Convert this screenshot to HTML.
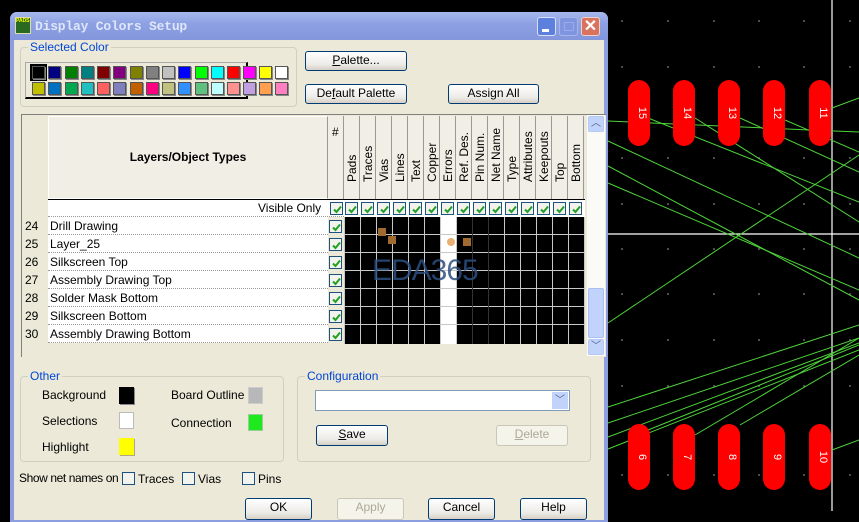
<!DOCTYPE html>
<html><head><meta charset="utf-8">
<style>
*{margin:0;padding:0;box-sizing:border-box}
body{width:859px;height:511px;overflow:hidden;background:#000;position:relative;font-family:"Liberation Sans",Arial,sans-serif;font-size:12px;color:#000}
.a{position:absolute}
.btn{position:absolute;background:linear-gradient(#fff,#ecebe6 70%,#d6d0c5);border:1px solid #003c74;border-radius:3px;text-align:center;font-size:12px;line-height:17px}
.btn.dis{border-color:#c9c7ba;color:#aca899;background:#f5f4ea}
.grp{position:absolute;border:1px solid #d0d0bf;border-radius:4px}
.lg{position:absolute;background:#ece9d8;color:#0046d5;padding:0 2px;font-size:12px}
.sw{position:absolute;width:13px;height:13px;border:1px solid #555;box-shadow:1px 1px 0 #888}
.cb{position:absolute;width:13px;height:13px;border:1px solid #1c5180;background:#f3f3ee}
.cb svg{position:absolute;left:1px;top:1px}
.hdr{position:absolute;top:116px;width:16px;height:83px;border-right:1px solid #999;background:#f1efe5}
.hdr span{position:absolute;left:1px;bottom:3px;transform-origin:0 0;transform:rotate(-90deg) translate(0,0);white-space:nowrap;font-size:12px;line-height:14px;}
.row{position:absolute;left:22px;width:322px;height:18px}
.num{position:absolute;left:3px;top:2px;font-size:12px}
.nm{position:absolute;left:26px;top:0;width:280px;height:18px;background:#fff;border-bottom:1px dotted #999;padding:2px 0 0 2px;font-size:12px}
</style></head><body>

<!-- PCB area -->
<svg class="a" style="left:600px;top:0" width="259" height="511">
<g fill="#666">
<circle cx="22" cy="21" r="1"/><circle cx="68" cy="21" r="1"/><circle cx="114" cy="21" r="1"/><circle cx="159" cy="21" r="1"/><circle cx="204" cy="21" r="1"/><circle cx="250" cy="21" r="1"/>
<circle cx="22" cy="67" r="1"/><circle cx="68" cy="67" r="1"/><circle cx="114" cy="67" r="1"/><circle cx="159" cy="67" r="1"/><circle cx="204" cy="67" r="1"/><circle cx="250" cy="67" r="1"/>
<circle cx="22" cy="158" r="1"/><circle cx="68" cy="158" r="1"/><circle cx="114" cy="158" r="1"/><circle cx="159" cy="158" r="1"/><circle cx="204" cy="158" r="1"/><circle cx="250" cy="158" r="1"/>
<circle cx="22" cy="204" r="1"/><circle cx="68" cy="204" r="1"/><circle cx="114" cy="204" r="1"/><circle cx="159" cy="204" r="1"/><circle cx="204" cy="204" r="1"/><circle cx="250" cy="204" r="1"/>
<circle cx="22" cy="249" r="1"/><circle cx="68" cy="249" r="1"/><circle cx="114" cy="249" r="1"/><circle cx="159" cy="249" r="1"/><circle cx="204" cy="249" r="1"/><circle cx="250" cy="249" r="1"/>
<circle cx="22" cy="294" r="1"/><circle cx="68" cy="294" r="1"/><circle cx="114" cy="294" r="1"/><circle cx="159" cy="294" r="1"/><circle cx="204" cy="294" r="1"/><circle cx="250" cy="294" r="1"/>
<circle cx="22" cy="340" r="1"/><circle cx="68" cy="340" r="1"/><circle cx="114" cy="340" r="1"/><circle cx="159" cy="340" r="1"/><circle cx="204" cy="340" r="1"/><circle cx="250" cy="340" r="1"/>
<circle cx="22" cy="386" r="1"/><circle cx="68" cy="386" r="1"/><circle cx="114" cy="386" r="1"/><circle cx="159" cy="386" r="1"/><circle cx="204" cy="386" r="1"/><circle cx="250" cy="386" r="1"/>
<circle cx="22" cy="475" r="1"/><circle cx="68" cy="475" r="1"/><circle cx="114" cy="475" r="1"/><circle cx="159" cy="475" r="1"/><circle cx="204" cy="475" r="1"/><circle cx="250" cy="475" r="1"/>
</g>
<line x1="232" y1="0" x2="232" y2="511" stroke="#fff" stroke-width="1.2"/>
<line x1="8" y1="234" x2="259" y2="234" stroke="#fff" stroke-width="1.2"/>
<g stroke="#4ed33a" stroke-width="1" fill="none">
<line x1="8" y1="121" x2="210" y2="130"/>
<line x1="210" y1="130" x2="259" y2="132"/>
<line x1="232" y1="108" x2="259" y2="98"/>
<line x1="48" y1="118" x2="259" y2="202"/>
<line x1="95" y1="118" x2="259" y2="222"/>
<line x1="140" y1="118" x2="259" y2="172"/>
<line x1="185" y1="120" x2="259" y2="152"/>
<line x1="8" y1="141" x2="259" y2="258"/>
<line x1="8" y1="166" x2="259" y2="300"/>
<line x1="8" y1="183" x2="259" y2="290"/>
<line x1="8" y1="323" x2="259" y2="155"/>
<line x1="8" y1="407" x2="259" y2="325"/>
<line x1="8" y1="423" x2="259" y2="338"/>
<line x1="8" y1="437" x2="259" y2="343"/>
<line x1="8" y1="449" x2="259" y2="350"/>
<line x1="48" y1="430" x2="259" y2="345"/>
<line x1="95" y1="435" x2="259" y2="338"/>
<line x1="140" y1="425" x2="259" y2="355"/>
<line x1="232" y1="450" x2="259" y2="440"/>
</g>
<g fill="#f00">
<rect x="28" y="80" width="22" height="66" rx="11"/><rect x="73" y="80" width="22" height="66" rx="11"/><rect x="118" y="80" width="22" height="66" rx="11"/><rect x="163" y="80" width="22" height="66" rx="11"/><rect x="209" y="80" width="22" height="66" rx="11"/>
<rect x="28" y="424" width="22" height="66" rx="11"/><rect x="73" y="424" width="22" height="66" rx="11"/><rect x="118" y="424" width="22" height="66" rx="11"/><rect x="163" y="424" width="22" height="66" rx="11"/><rect x="209" y="424" width="22" height="66" rx="11"/>
</g>
<g fill="#fff" font-family="Liberation Sans" font-size="11" text-anchor="middle">
<text transform="translate(39,113) rotate(90)">15</text><text transform="translate(84,113) rotate(90)">14</text><text transform="translate(129,113) rotate(90)">13</text><text transform="translate(174,113) rotate(90)">12</text><text transform="translate(220,113) rotate(90)">11</text>
<text transform="translate(39,457) rotate(90)">6</text><text transform="translate(84,457) rotate(90)">7</text><text transform="translate(129,457) rotate(90)">8</text><text transform="translate(174,457) rotate(90)">9</text><text transform="translate(220,457) rotate(90)">10</text>
</g>
</svg>

<!-- dialog frame -->
<div class="a" style="left:10px;top:12px;width:598px;height:510px;background:#8d9ee0;border-radius:7px 7px 0 0"></div>
<div class="a" style="left:10px;top:12px;width:598px;height:28px;background:linear-gradient(#a8b8ee,#8da1e3 40%,#8396dc);border-radius:7px 7px 0 0"></div>
<div class="a" style="left:15px;top:17px;width:16px;height:17px;background:#2a6a20;border:1px solid #dda"><div style="font-size:5px;color:#ff0;font-weight:bold;line-height:6px">PADS</div></div>
<div class="a" style="left:35px;top:19px;color:#dfe6fa;font-family:'Liberation Mono',monospace;font-weight:bold;font-size:13px;letter-spacing:-0.2px">Display Colors Setup</div>
<div class="a" style="left:537px;top:17px;width:19px;height:19px;background:#5d7fdd;border:1px solid #d8e0f8;border-radius:3px"><div class="a" style="left:4px;top:11px;width:7px;height:3px;background:#fff"></div></div>
<div class="a" style="left:559px;top:17px;width:19px;height:19px;background:#7f95df;border:1px solid #a6b6ec;border-radius:3px"><div class="a" style="left:4px;top:4px;width:10px;height:9px;border:1px solid #9aace8"></div></div>
<div class="a" style="left:581px;top:17px;width:19px;height:19px;background:#d9735e;border:1px solid #f0d0c8;border-radius:3px;color:#fff;font-weight:bold;font-size:16px;line-height:17px;text-align:center">✕</div>
<div class="a" style="left:14px;top:40px;width:590px;height:480px;background:#ece9d8"></div>

<!-- Selected color -->
<div class="grp" style="left:20px;top:47px;width:277px;height:60px"></div>
<div class="lg" style="left:28px;top:40px">Selected Color</div>
<div class="a" style="left:25px;top:62px;width:223px;height:37px;border-top:1px solid #aaa;border-left:1px solid #aaa;border-right:2px solid #000;border-bottom:2px solid #000;background:#ece9d8"></div>
<div class="a" style="left:30px;top:64px;width:17px;height:17px;border:2px solid #000;background:#fff"></div>
<div class="sw" style="left:32px;top:66px;background:#000"></div>
<div class="sw" style="left:48px;top:66px;background:#000080"></div>
<div class="sw" style="left:65px;top:66px;background:#008000"></div>
<div class="sw" style="left:81px;top:66px;background:#008080"></div>
<div class="sw" style="left:97px;top:66px;background:#800000"></div>
<div class="sw" style="left:113px;top:66px;background:#800080"></div>
<div class="sw" style="left:130px;top:66px;background:#808000"></div>
<div class="sw" style="left:146px;top:66px;background:#808080"></div>
<div class="sw" style="left:162px;top:66px;background:#c0c0c0"></div>
<div class="sw" style="left:178px;top:66px;background:#0000ff"></div>
<div class="sw" style="left:195px;top:66px;background:#00ff00"></div>
<div class="sw" style="left:211px;top:66px;background:#00ffff"></div>
<div class="sw" style="left:227px;top:66px;background:#ff0000"></div>
<div class="sw" style="left:243px;top:66px;background:#ff00ff"></div>
<div class="sw" style="left:259px;top:66px;background:#ffff00"></div>
<div class="sw" style="left:275px;top:66px;background:#fff"></div>
<div class="sw" style="left:32px;top:82px;background:#c0c000"></div>
<div class="sw" style="left:48px;top:82px;background:#0070c0"></div>
<div class="sw" style="left:65px;top:82px;background:#00a850"></div>
<div class="sw" style="left:81px;top:82px;background:#20c0c0"></div>
<div class="sw" style="left:97px;top:82px;background:#ff6060"></div>
<div class="sw" style="left:113px;top:82px;background:#8080c0"></div>
<div class="sw" style="left:130px;top:82px;background:#c06000"></div>
<div class="sw" style="left:146px;top:82px;background:#ff0080"></div>
<div class="sw" style="left:162px;top:82px;background:#c0c080"></div>
<div class="sw" style="left:178px;top:82px;background:#3090ff"></div>
<div class="sw" style="left:195px;top:82px;background:#60c080"></div>
<div class="sw" style="left:211px;top:82px;background:#c0ffff"></div>
<div class="sw" style="left:227px;top:82px;background:#ff9090"></div>
<div class="sw" style="left:243px;top:82px;background:#c0a0e0"></div>
<div class="sw" style="left:259px;top:82px;background:#ffa050"></div>
<div class="sw" style="left:275px;top:82px;background:#ff80c0"></div>

<div class="btn" style="left:305px;top:51px;width:102px;height:20px"><u>P</u>alette...</div>
<div class="btn" style="left:305px;top:84px;width:102px;height:20px">De<u>f</u>ault Palette</div>
<div class="btn" style="left:448px;top:84px;width:91px;height:20px">Assign All</div>

<!-- grid -->
<div class="a" style="left:21px;top:114px;width:585px;height:243px;border-top:1px solid #808080;border-left:1px solid #808080;background:#ece9d8"></div>
<div class="a" style="left:48px;top:116px;width:280px;height:83px;background:#f1efe5;border:1px solid #fff;border-right:1px solid #999"></div>
<div class="a" style="left:48px;top:150px;width:280px;text-align:center;font-weight:bold;font-size:12px">Layers/Object Types</div>
<div class="a" style="left:48px;top:199px;width:537px;height:1px;background:#000"></div>
<div class="a" style="left:48px;top:200px;width:296px;height:17px;background:#fff;border-bottom:1px dotted #999"></div>
<div class="a" style="left:344px;top:200px;width:241px;height:17px;background:#fff"></div>
<div class="a" style="left:258px;top:201px;font-size:12px">Visible Only</div>

<div class="hdr" style="left:328px"><span style="left:4px;bottom:60px;transform:none">#</span></div>
<div class="hdr" style="left:344px"><span>Pads</span></div>
<div class="hdr" style="left:360px"><span>Traces</span></div>
<div class="hdr" style="left:376px"><span>Vias</span></div>
<div class="hdr" style="left:392px"><span>Lines</span></div>
<div class="hdr" style="left:408px"><span>Text</span></div>
<div class="hdr" style="left:424px"><span>Copper</span></div>
<div class="hdr" style="left:440px"><span>Errors</span></div>
<div class="hdr" style="left:456px"><span>Ref. Des.</span></div>
<div class="hdr" style="left:472px"><span>Pin Num.</span></div>
<div class="hdr" style="left:488px"><span>Net Name</span></div>
<div class="hdr" style="left:504px"><span>Type</span></div>
<div class="hdr" style="left:520px"><span>Attributes</span></div>
<div class="hdr" style="left:536px"><span>Keepouts</span></div>
<div class="hdr" style="left:552px"><span>Top</span></div>
<div class="hdr" style="left:568px"><span>Bottom</span></div>

<!-- color cells -->
<svg class="a" style="left:344px;top:217px" width="241" height="127">
<rect width="241" height="127" fill="#000"/>
<rect x="96" width="16" height="127" fill="#fff"/>
<g stroke="#c8c8c8" stroke-width="1">
<line x1="0.5" y1="0" x2="0.5" y2="127"/><line x1="16.5" y1="0" x2="16.5" y2="127"/><line x1="32.5" y1="0" x2="32.5" y2="127"/><line x1="48.5" y1="0" x2="48.5" y2="127"/><line x1="64.5" y1="0" x2="64.5" y2="127"/><line x1="80.5" y1="0" x2="80.5" y2="127"/><line x1="96.5" y1="0" x2="96.5" y2="127"/><line x1="112.5" y1="0" x2="112.5" y2="127"/><line x1="128.5" y1="0" x2="128.5" y2="127"/><line x1="144.5" y1="0" x2="144.5" y2="127"/><line x1="160.5" y1="0" x2="160.5" y2="127"/><line x1="176.5" y1="0" x2="176.5" y2="127"/><line x1="192.5" y1="0" x2="192.5" y2="127"/><line x1="208.5" y1="0" x2="208.5" y2="127"/><line x1="224.5" y1="0" x2="224.5" y2="127"/><line x1="240.5" y1="0" x2="240.5" y2="127"/>
<line x1="0" y1="17.5" x2="241" y2="17.5"/><line x1="0" y1="35.5" x2="241" y2="35.5"/><line x1="0" y1="53.5" x2="241" y2="53.5"/><line x1="0" y1="71.5" x2="241" y2="71.5"/><line x1="0" y1="89.5" x2="241" y2="89.5"/><line x1="0" y1="107.5" x2="241" y2="107.5"/>
</g>
<line x1="128.5" y1="0" x2="128.5" y2="127" stroke="#333"/><line x1="144.5" y1="0" x2="144.5" y2="127" stroke="#333"/>
</svg>
<div class="a" style="left:372px;top:254px;color:#2c4f80;font-size:30px;opacity:.85;letter-spacing:-1px">EDA365</div>
<div class="a" style="left:378px;top:228px;width:8px;height:8px;background:#a06a30"></div>
<div class="a" style="left:388px;top:236px;width:8px;height:8px;background:#a06a30"></div>
<div class="a" style="left:463px;top:238px;width:8px;height:8px;background:#a06a30"></div>
<div class="a" style="left:447px;top:238px;width:8px;height:8px;border-radius:4px;background:#e8b070"></div>

<div class="row" style="top:217px"><span class="num">24</span><div class="nm">Drill Drawing</div></div>
<div class="row" style="top:235px"><span class="num">25</span><div class="nm">Layer_25</div></div>
<div class="row" style="top:253px"><span class="num">26</span><div class="nm">Silkscreen Top</div></div>
<div class="row" style="top:271px"><span class="num">27</span><div class="nm">Assembly Drawing Top</div></div>
<div class="row" style="top:289px"><span class="num">28</span><div class="nm">Solder Mask Bottom</div></div>
<div class="row" style="top:307px"><span class="num">29</span><div class="nm">Silkscreen Bottom</div></div>
<div class="row" style="top:325px"><span class="num">30</span><div class="nm">Assembly Drawing Bottom</div></div>

<!-- checkboxes -->
<svg width="0" height="0" style="position:absolute"><defs><path id="ck" d="M2 5.5 L4.5 8 L9 2.5" stroke="#21a121" stroke-width="2" fill="none"/></defs></svg>
<div class="cb" style="left:330px;top:202px"><svg width="11" height="11"><use href="#ck"/></svg></div>
<div class="cb" style="left:345px;top:202px"><svg width="11" height="11"><use href="#ck"/></svg></div>
<div class="cb" style="left:361px;top:202px"><svg width="11" height="11"><use href="#ck"/></svg></div>
<div class="cb" style="left:377px;top:202px"><svg width="11" height="11"><use href="#ck"/></svg></div>
<div class="cb" style="left:393px;top:202px"><svg width="11" height="11"><use href="#ck"/></svg></div>
<div class="cb" style="left:409px;top:202px"><svg width="11" height="11"><use href="#ck"/></svg></div>
<div class="cb" style="left:425px;top:202px"><svg width="11" height="11"><use href="#ck"/></svg></div>
<div class="cb" style="left:441px;top:202px"><svg width="11" height="11"><use href="#ck"/></svg></div>
<div class="cb" style="left:457px;top:202px"><svg width="11" height="11"><use href="#ck"/></svg></div>
<div class="cb" style="left:473px;top:202px"><svg width="11" height="11"><use href="#ck"/></svg></div>
<div class="cb" style="left:489px;top:202px"><svg width="11" height="11"><use href="#ck"/></svg></div>
<div class="cb" style="left:505px;top:202px"><svg width="11" height="11"><use href="#ck"/></svg></div>
<div class="cb" style="left:521px;top:202px"><svg width="11" height="11"><use href="#ck"/></svg></div>
<div class="cb" style="left:537px;top:202px"><svg width="11" height="11"><use href="#ck"/></svg></div>
<div class="cb" style="left:553px;top:202px"><svg width="11" height="11"><use href="#ck"/></svg></div>
<div class="cb" style="left:569px;top:202px"><svg width="11" height="11"><use href="#ck"/></svg></div>
<div class="cb" style="left:329px;top:220px"><svg width="11" height="11"><use href="#ck"/></svg></div>
<div class="cb" style="left:329px;top:238px"><svg width="11" height="11"><use href="#ck"/></svg></div>
<div class="cb" style="left:329px;top:256px"><svg width="11" height="11"><use href="#ck"/></svg></div>
<div class="cb" style="left:329px;top:274px"><svg width="11" height="11"><use href="#ck"/></svg></div>
<div class="cb" style="left:329px;top:292px"><svg width="11" height="11"><use href="#ck"/></svg></div>
<div class="cb" style="left:329px;top:310px"><svg width="11" height="11"><use href="#ck"/></svg></div>
<div class="cb" style="left:329px;top:328px"><svg width="11" height="11"><use href="#ck"/></svg></div>

<!-- scrollbar -->
<div class="a" style="left:587px;top:115px;width:18px;height:241px;background:#fafaf6"></div>
<div class="a" style="left:588px;top:116px;width:16px;height:16px;background:#c1d3fb;border:1px solid #b6c8f4;border-radius:2px;color:#4d6185;font-size:10px;text-align:center;line-height:14px">︿</div>
<div class="a" style="left:588px;top:288px;width:16px;height:50px;background:#c1d3fb;border:1px solid #a8bdf0;border-radius:2px"></div>
<div class="a" style="left:588px;top:339px;width:16px;height:16px;background:#c1d3fb;border:1px solid #b6c8f4;border-radius:2px;color:#4d6185;font-size:10px;text-align:center;line-height:14px">﹀</div>

<!-- Other -->
<div class="grp" style="left:20px;top:376px;width:264px;height:86px"></div>
<div class="lg" style="left:28px;top:369px">Other</div>
<div class="a" style="left:42px;top:388px">Background</div>
<div class="a" style="left:42px;top:414px">Selections</div>
<div class="a" style="left:42px;top:440px">Highlight</div>
<div class="a" style="left:171px;top:388px">Board Outline</div>
<div class="a" style="left:171px;top:416px">Connection</div>
<div class="a" style="left:119px;top:387px;width:15px;height:17px;background:#000;box-shadow:1px 1px 0 #888"></div>
<div class="a" style="left:119px;top:412px;width:15px;height:17px;background:#fff;border:1px solid #bbb"></div>
<div class="a" style="left:119px;top:438px;width:15px;height:17px;background:#ff0;box-shadow:1px 1px 0 #aa8"></div>
<div class="a" style="left:248px;top:387px;width:15px;height:17px;background:#b8b8b8;border:1px solid #ccc"></div>
<div class="a" style="left:248px;top:414px;width:15px;height:17px;background:#1ee81e;border:1px solid #9c9"></div>

<!-- Configuration -->
<div class="grp" style="left:297px;top:376px;width:294px;height:86px"></div>
<div class="lg" style="left:305px;top:369px">Configuration</div>
<div class="a" style="left:315px;top:390px;width:255px;height:21px;background:#fff;border:1px solid #7f9db9"></div>
<div class="a" style="left:552px;top:392px;width:16px;height:17px;background:#c1d3fb;color:#4d6185;font-size:10px;text-align:center;line-height:17px">﹀</div>
<div class="btn" style="left:316px;top:425px;width:72px;height:21px"><u>S</u>ave</div>
<div class="btn dis" style="left:496px;top:425px;width:72px;height:21px"><u>D</u>elete</div>

<!-- Show net names -->
<div class="a" style="left:19px;top:471px;letter-spacing:-0.4px">Show net names on</div>
<div class="a" style="left:122px;top:472px;width:13px;height:13px;border:1px solid #1c5180;background:#f3f3ee"></div>
<div class="a" style="left:138px;top:472px">Traces</div>
<div class="a" style="left:182px;top:472px;width:13px;height:13px;border:1px solid #1c5180;background:#f3f3ee"></div>
<div class="a" style="left:198px;top:472px">Vias</div>
<div class="a" style="left:242px;top:472px;width:13px;height:13px;border:1px solid #1c5180;background:#f3f3ee"></div>
<div class="a" style="left:258px;top:472px">Pins</div>

<div class="btn" style="left:245px;top:498px;width:67px;height:22px">OK</div>
<div class="btn dis" style="left:337px;top:498px;width:67px;height:22px">Apply</div>
<div class="btn" style="left:428px;top:498px;width:67px;height:22px">Cancel</div>
<div class="btn" style="left:520px;top:498px;width:67px;height:22px">Help</div>
</body></html>
